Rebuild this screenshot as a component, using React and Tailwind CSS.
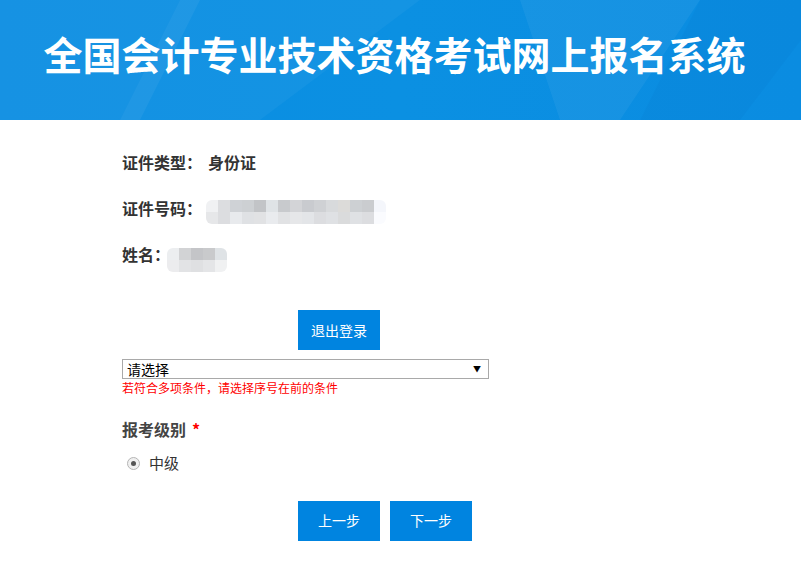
import React from "react";

const font = { fontFamily: '"Microsoft YaHei", "Noto Sans CJK SC", "Noto Sans", sans-serif' };

// mosaic cells for the blurred fields
const idTop = ["#f0f1f3", "#dcdde0", "#cfd2d6", "#cdd0d3", "#c2c4c7", "#dfe3e6", "#c8cacd", "#d3d4d7", "#c9cbcf", "#cfd1d4", "#d8dadc", "#dcdbd9", "#cdd0d3", "#cacccf", "#f4f6fb"];
const idBottom = ["#e6e7e9", "#dcdde0", "#e8eaed", "#dfe1e4", "#e1e2e4", "#e9ebee", "#e1e2e4", "#e6e7e9", "#e3e5e8", "#dcdde0", "#dfe1e4", "#dadbdc", "#dfe1e4", "#dcdde0", "#fafbfe"];
const nameTop = ["#eceef0", "#d2d3d5", "#c4c5c8", "#c9cacc", "#dfe3e6"];
const nameBottom = ["#ececee", "#e2e3e5", "#dfe0e2", "#e4e5e7", "#f0f1f2"];

function Mosaic({ top, bottom }) {
  return (
    <div className="inline-flex flex-col rounded-[6px] overflow-hidden">
      <div className="flex">
        {top.map((c, i) => (
          <div key={i} className="w-[12px] h-[12px]" style={{ background: c }} />
        ))}
      </div>
      <div className="flex">
        {bottom.map((c, i) => (
          <div key={i} className="w-[12px] h-[12px]" style={{ background: c }} />
        ))}
      </div>
    </div>
  );
}

function Header() {
  return (
    <div className="relative h-[120px] overflow-hidden bg-[linear-gradient(90deg,#0a8de2,#0b90e2_50%,#0a8ce1)]">
      {/* jaśniejsze pola w tle */}
      <svg className="absolute inset-0" width="801" height="120" viewBox="0 0 801 120">
        <polygon points="0,0 200,0 140,120 0,120" fill="#ffffff" opacity="0.05" />
        <polygon points="180,0 420,0 260,120 120,120" fill="#ffffff" opacity="0.04" />
        <polygon points="520,0 700,0 620,120 560,120" fill="#ffffff" opacity="0.05" />
        <polygon points="700,0 801,0 801,40 740,120 640,120" fill="#004f9a" opacity="0.05" />
      </svg>
      <div className="relative flex h-full items-center justify-center pb-[14px] pr-[12px]">
        <h1 className="text-white font-bold text-[39px] tracking-[0px] leading-none">
          全国会计专业技术资格考试网上报名系统
        </h1>
      </div>
    </div>
  );
}

export default function App() {
  return (
    <div className="w-[801px] h-[566px] bg-white overflow-hidden" style={font}>
      <Header />

      <div className="pl-[122px] pt-[28px]">
        {/* dane osoby */}
        <div className="flex items-center h-[28px] text-[16px] font-bold text-[#333]">
          <span>证件类型：</span>
          <span className="ml-[6px]">身份证</span>
        </div>
        <div className="flex items-center h-[28px] mt-[18px] text-[16px] font-bold text-[#333]">
          <span>证件号码：</span>
          <span className="ml-[4px]">
            <Mosaic top={idTop} bottom={idBottom} />
          </span>
        </div>
        <div className="flex items-center h-[28px] mt-[18px] text-[16px] font-bold text-[#333]">
          <span>姓名：</span>
          <span className="ml-[-3px] mt-[4px]">
            <Mosaic top={nameTop} bottom={nameBottom} />
          </span>
        </div>

        <div className="pl-[176px] mt-[42px]">
          <button className="w-[82px] h-[40px] bg-[#0084e0] text-white text-[14px]">退出登录</button>
        </div>

        <div className="mt-[9px] w-[367px] h-[20px] border border-[#a9a9a9] flex items-center justify-between pl-[4px] pr-[7px] text-[14px] text-black">
          <span className="leading-none">请选择</span>
          <span className="text-[8px] leading-none">▼</span>
        </div>
        <p className="text-[12px] text-[#ff0000] leading-[16px] mt-[1px]">若符合多项条件，请选择序号在前的条件</p>

        <div className="mt-[21px] flex items-center text-[16px] font-bold text-[#444]">
          <span>报考级别</span>
          <span className="ml-[6px] text-[#ff0000]">*</span>
        </div>

        <div className="mt-[11px] ml-[5px] flex items-center text-[15px] text-[#333]">
          <span className="w-[13px] h-[13px] rounded-full border border-[#b5b5b5] bg-[#f0f0f0] flex items-center justify-center">
            <span className="w-[5px] h-[5px] rounded-full bg-[#555]" />
          </span>
          <span className="ml-[9px]">中级</span>
        </div>

        <div className="pl-[176px] mt-[26px] flex gap-[10px]">
          <button className="w-[82px] h-[40px] bg-[#0084e0] text-white text-[14px]">上一步</button>
          <button className="w-[82px] h-[40px] bg-[#0084e0] text-white text-[14px]">下一步</button>
        </div>
      </div>
    </div>
  );
}
